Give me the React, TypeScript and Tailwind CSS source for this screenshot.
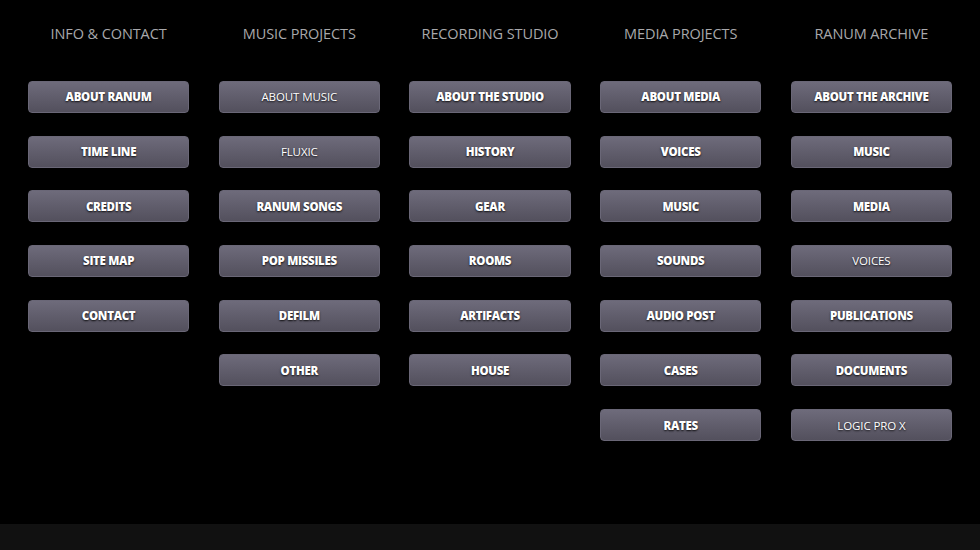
import React from 'react';

type Item = { label: string; bold?: boolean };
type Column = { title: string; items: Item[] };

const columns: Column[] = [
  {
    title: 'INFO & CONTACT',
    items: [
      { label: 'ABOUT RANUM', bold: true },
      { label: 'TIME LINE', bold: true },
      { label: 'CREDITS', bold: true },
      { label: 'SITE MAP', bold: true },
      { label: 'CONTACT', bold: true },
    ],
  },
  {
    title: 'MUSIC PROJECTS',
    items: [
      { label: 'ABOUT MUSIC' },
      { label: 'FLUXIC' },
      { label: 'RANUM SONGS', bold: true },
      { label: 'POP MISSILES', bold: true },
      { label: 'DEFILM', bold: true },
      { label: 'OTHER', bold: true },
    ],
  },
  {
    title: 'RECORDING STUDIO',
    items: [
      { label: 'ABOUT THE STUDIO', bold: true },
      { label: 'HISTORY', bold: true },
      { label: 'GEAR', bold: true },
      { label: 'ROOMS', bold: true },
      { label: 'ARTIFACTS', bold: true },
      { label: 'HOUSE', bold: true },
    ],
  },
  {
    title: 'MEDIA PROJECTS',
    items: [
      { label: 'ABOUT MEDIA', bold: true },
      { label: 'VOICES', bold: true },
      { label: 'MUSIC', bold: true },
      { label: 'SOUNDS', bold: true },
      { label: 'AUDIO POST', bold: true },
      { label: 'CASES', bold: true },
      { label: 'RATES', bold: true },
    ],
  },
  {
    title: 'RANUM ARCHIVE',
    items: [
      { label: 'ABOUT THE ARCHIVE', bold: true },
      { label: 'MUSIC', bold: true },
      { label: 'MEDIA', bold: true },
      { label: 'VOICES' },
      { label: 'PUBLICATIONS', bold: true },
      { label: 'DOCUMENTS', bold: true },
      { label: 'LOGIC PRO X' },
    ],
  },
];

function NavButton({ label, bold }: Item) {
  return (
    <a
      href="#"
      className={
        'flex h-[32px] items-center justify-center rounded-[4px] border border-[#6a6777] bg-gradient-to-b from-[#6e6b7b] to-[#53505d] text-[11.5px] text-white shadow-[0_1px_2px_rgba(0,0,0,0.6)] [text-shadow:0_1px_2px_rgba(0,0,0,0.85)] ' +
        (bold ? 'font-extrabold tracking-[-0.3px]' : 'font-normal tracking-[-0.1px] text-[#f4f4f6]')
      }
    >
      {label}
    </a>
  );
}

export default function App() {
  return (
    <div className="flex h-[550px] w-full flex-col bg-black font-['Open_Sans','Liberation_Sans',sans-serif]">
      <main className="flex-1 px-[28px] pt-[24px]">
        <div className="grid grid-cols-5 gap-x-[29.5px]">
          {columns.map((col) => (
            <div key={col.title} className="flex flex-col">
              <h2 className="mb-[37px] h-[20px] text-center text-[14.5px] leading-[20px] font-normal tracking-[-0.1px] text-[#a8a8ab]">
                {col.title}
              </h2>
              <div className="flex flex-col gap-[22.7px]">
                {col.items.map((it, i) => (
                  <NavButton key={i} {...it} />
                ))}
              </div>
            </div>
          ))}
        </div>
      </main>
      <footer className="h-[26px] bg-[#111111]" />
    </div>
  );
}
